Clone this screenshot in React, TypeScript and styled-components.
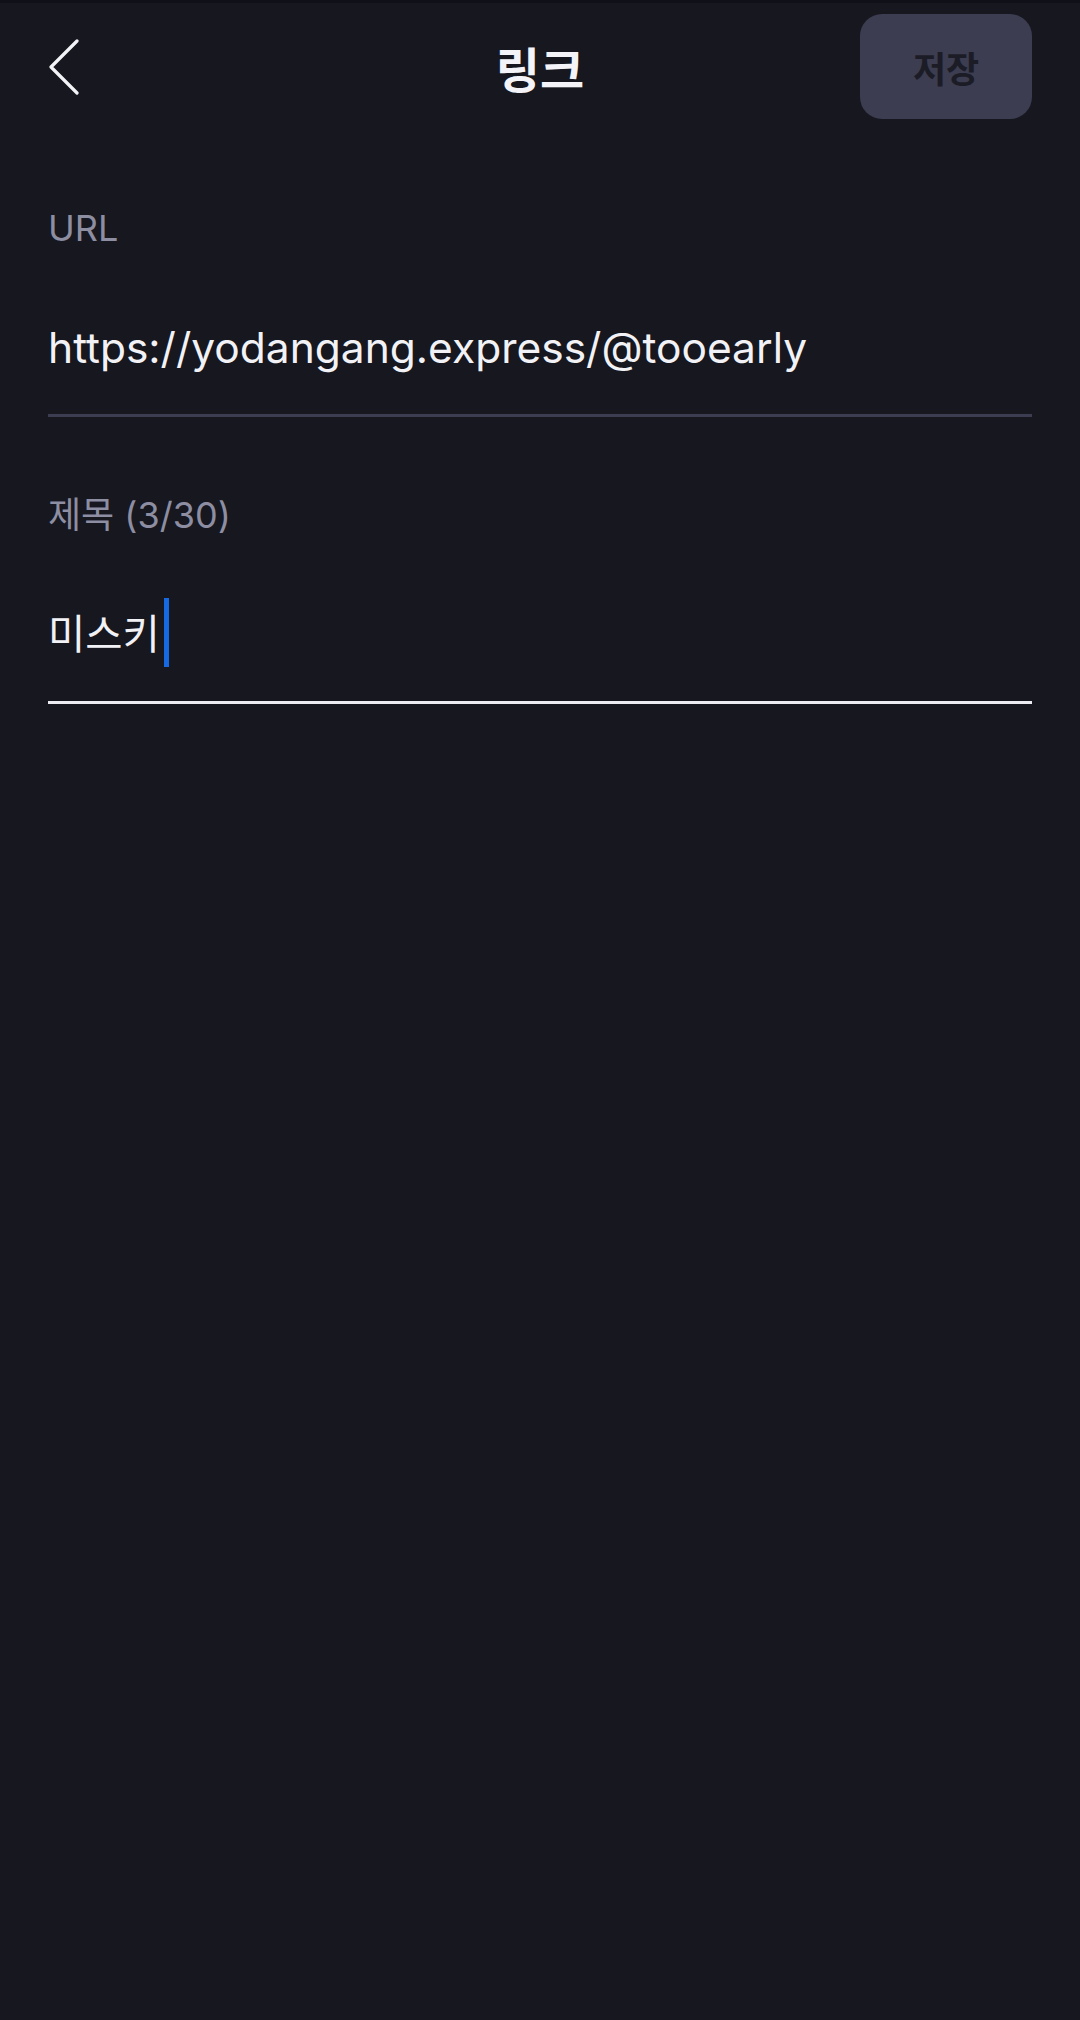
import React from 'react';
import styled, { createGlobalStyle } from 'styled-components';

const GlobalStyle = createGlobalStyle`
    html, body {
        margin: 0;
        padding: 0;
        background: #16171f;
    }
    body {
        font-family: Inter, "Noto Sans CJK KR", sans-serif;
        -webkit-font-smoothing: antialiased;
    }
`;

const Page = styled.main`
    min-height: 2020px;
    box-sizing: border-box;
    background: #16171f;
    border-top: 3px solid #101118;
    color: #f2f2f6;
`;

const Header = styled.header`
    display: grid;
    grid-template-columns: 1fr auto 1fr;
    align-items: center;
    padding: 11px 48px 0;
`;

const BackButton = styled.button`
    justify-self: start;
    display: flex;
    align-items: center;
    padding: 0;
    border: none;
    background: none;
    cursor: pointer;
`;

const Title = styled.h1`
    margin: 0;
    font-size: 48px;
    font-weight: 700;
    color: #f4f4f8;
`;

const SaveButton = styled.button`
    justify-self: end;
    width: 172px;
    height: 105px;
    border: none;
    border-radius: 22px;
    background: #3c3d51;
    color: #1b1c26;
    font-family: inherit;
    font-size: 36px;
    font-weight: 600;
`;

const Form = styled.section`
    padding: 0 48px;
`;

const Field = styled.div<{ $gap: number }>`
    margin-top: ${p => p.$gap}px;
`;

const Label = styled.div`
    font-size: 36px;
    line-height: 44px;
    color: #8d8ea2;
`;

const InputRow = styled.div<{ $active?: boolean }>`
    display: flex;
    align-items: flex-start;
    height: 52px;
    margin-top: 72px;
    padding-bottom: 40px;
    border-bottom: 3px solid ${p => (p.$active ? '#ececf2' : '#3c3d51')};
`;

const Value = styled.span<{ $size?: number }>`
    font-size: ${p => p.$size ?? 42.5}px;
    line-height: 52px;
    color: #f2f2f6;
    white-space: nowrap;
`;

const Caret = styled.span`
    display: block;
    width: 5px;
    height: 69px;
    margin: -11px 0 0 4px;
    background: #1669e0;
`;

const Content: React.FC = () => {
    return (
        <Page>
            <Header>
                <BackButton aria-label="back">
                    <svg width="32" height="56" viewBox="0 0 32 56" fill="none">
                        <path d="M29 2 L3 28 L29 54" stroke="#f4f4f8" strokeWidth="3.2" strokeLinecap="round" strokeLinejoin="round" />
                    </svg>
                </BackButton>
                <Title>링크</Title>
                <SaveButton>저장</SaveButton>
            </Header>
            <Form>
                <Field $gap={87}>
                    <Label>URL</Label>
                    <InputRow>
                        <Value>https://yodangang.express/@tooearly</Value>
                    </InputRow>
                </Field>
                <Field $gap={76}>
                    <Label>제목 (3/30)</Label>
                    <InputRow $active>
                        <Value $size={40.5}>미스키</Value>
                        <Caret />
                    </InputRow>
                </Field>
            </Form>
        </Page>
    );
};

const App: React.FC = () => (
    <>
        <GlobalStyle />
        <Content />
    </>
);

export default App;
